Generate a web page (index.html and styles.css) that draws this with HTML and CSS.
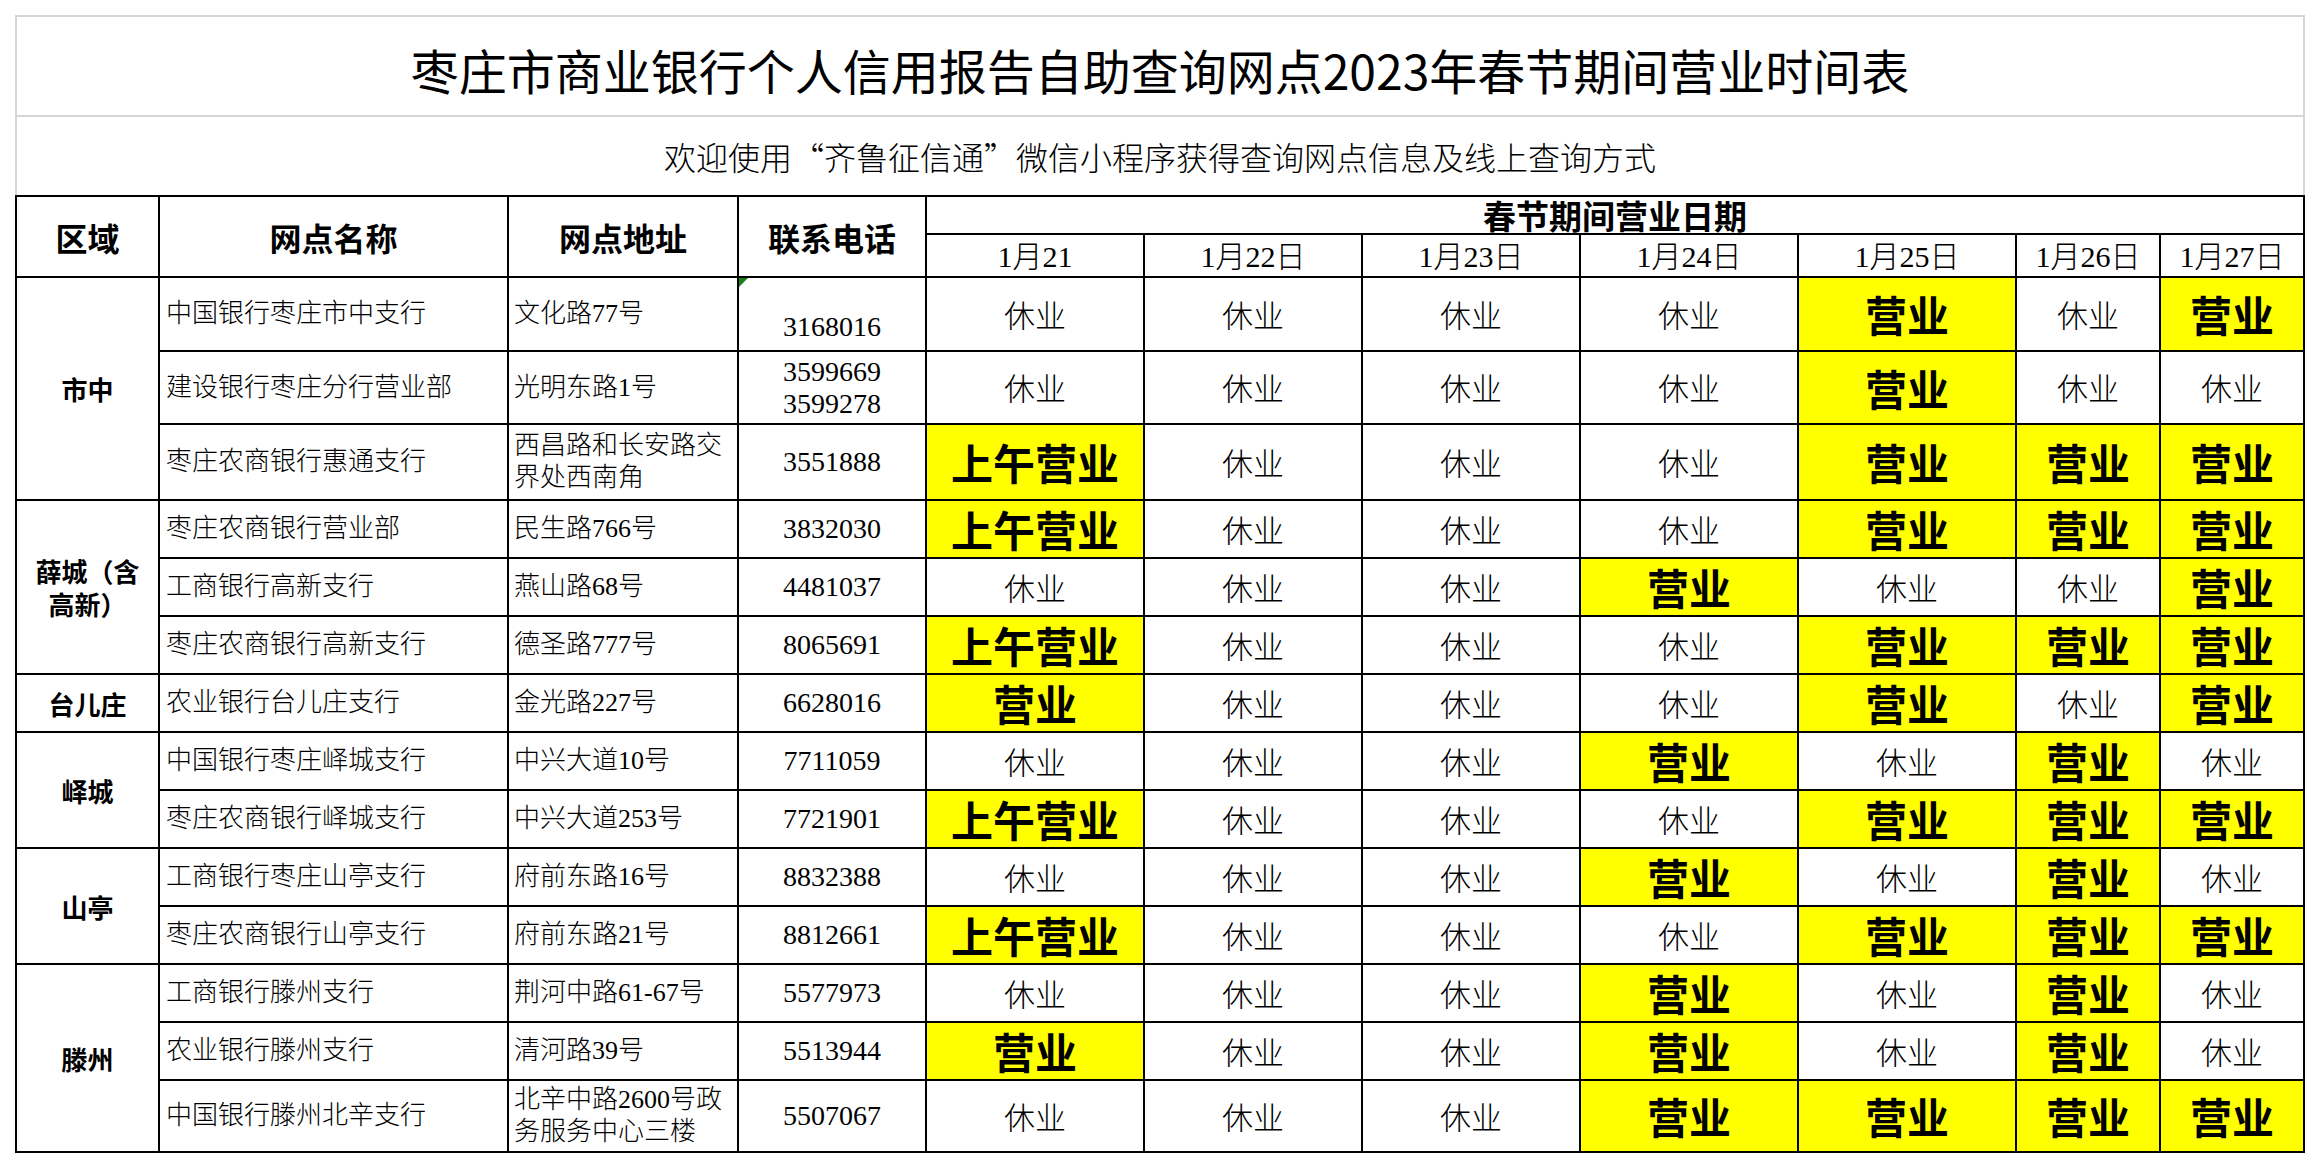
FILE: index.html
```html
<!DOCTYPE html>
<html lang="zh-CN">
<head>
<meta charset="utf-8">
<title>枣庄市商业银行个人信用报告自助查询网点2023年春节期间营业时间表</title>
<link rel="stylesheet" href="styles.css">
</head>
<body>
<div class="sheet">
  <div class="title">枣庄市商业银行个人信用报告自助查询网点2023年春节期间营业时间表</div>
  <div class="subtitle">欢迎使用“齐鲁征信通”微信小程序获得查询网点信息及线上查询方式</div>
  <table class="grid">
    <colgroup>
      <col class="c-rg"><col class="c-nm"><col class="c-ad"><col class="c-ph">
      <col class="c-d"><col class="c-d"><col class="c-d"><col class="c-d"><col class="c-d">
      <col class="c-s"><col class="c-s">
    </colgroup>
    <thead>
      <tr class="h1">
        <th rowspan="2" class="hd">区域</th>
        <th rowspan="2" class="hd">网点名称</th>
        <th rowspan="2" class="hd">网点地址</th>
        <th rowspan="2" class="hd">联系电话</th>
        <th colspan="7" class="hd period">春节期间营业日期</th>
      </tr>
      <tr class="h2">
        <th class="dt">1月21</th>
        <th class="dt">1月22日</th>
        <th class="dt">1月23日</th>
        <th class="dt">1月24日</th>
        <th class="dt">1月25日</th>
        <th class="dt">1月26日</th>
        <th class="dt">1月27日</th>
      </tr>
    </thead>
    <tbody>
      <tr class="r74">
        <td rowspan="3" class="rg">市中</td>
        <td class="nm">中国银行枣庄市中支行</td>
        <td class="ad">文化路77号</td>
        <td class="ph ph-low"><span class="flag"></span>3168016</td>
        <td class="off">休业</td><td class="off">休业</td><td class="off">休业</td><td class="off">休业</td>
        <td class="on">营业</td><td class="off">休业</td><td class="on">营业</td>
      </tr>
      <tr class="r73">
        <td class="nm">建设银行枣庄分行营业部</td>
        <td class="ad">光明东路1号</td>
        <td class="ph">3599669<br>3599278</td>
        <td class="off">休业</td><td class="off">休业</td><td class="off">休业</td><td class="off">休业</td>
        <td class="on">营业</td><td class="off">休业</td><td class="off">休业</td>
      </tr>
      <tr class="r76">
        <td class="nm">枣庄农商银行惠通支行</td>
        <td class="ad">西昌路和长安路交界处西南角</td>
        <td class="ph">3551888</td>
        <td class="on">上午营业</td><td class="off">休业</td><td class="off">休业</td><td class="off">休业</td>
        <td class="on">营业</td><td class="on">营业</td><td class="on">营业</td>
      </tr>
      <tr class="r58">
        <td rowspan="3" class="rg">薛城（含<br>高新）</td>
        <td class="nm">枣庄农商银行营业部</td>
        <td class="ad">民生路766号</td>
        <td class="ph">3832030</td>
        <td class="on">上午营业</td><td class="off">休业</td><td class="off">休业</td><td class="off">休业</td>
        <td class="on">营业</td><td class="on">营业</td><td class="on">营业</td>
      </tr>
      <tr class="r58">
        <td class="nm">工商银行高新支行</td>
        <td class="ad">燕山路68号</td>
        <td class="ph">4481037</td>
        <td class="off">休业</td><td class="off">休业</td><td class="off">休业</td><td class="on">营业</td>
        <td class="off">休业</td><td class="off">休业</td><td class="on">营业</td>
      </tr>
      <tr class="r58">
        <td class="nm">枣庄农商银行高新支行</td>
        <td class="ad">德圣路777号</td>
        <td class="ph">8065691</td>
        <td class="on">上午营业</td><td class="off">休业</td><td class="off">休业</td><td class="off">休业</td>
        <td class="on">营业</td><td class="on">营业</td><td class="on">营业</td>
      </tr>
      <tr class="r58">
        <td class="rg">台儿庄</td>
        <td class="nm">农业银行台儿庄支行</td>
        <td class="ad">金光路227号</td>
        <td class="ph">6628016</td>
        <td class="on">营业</td><td class="off">休业</td><td class="off">休业</td><td class="off">休业</td>
        <td class="on">营业</td><td class="off">休业</td><td class="on">营业</td>
      </tr>
      <tr class="r58">
        <td rowspan="2" class="rg">峄城</td>
        <td class="nm">中国银行枣庄峄城支行</td>
        <td class="ad">中兴大道10号</td>
        <td class="ph">7711059</td>
        <td class="off">休业</td><td class="off">休业</td><td class="off">休业</td><td class="on">营业</td>
        <td class="off">休业</td><td class="on">营业</td><td class="off">休业</td>
      </tr>
      <tr class="r58">
        <td class="nm">枣庄农商银行峄城支行</td>
        <td class="ad">中兴大道253号</td>
        <td class="ph">7721901</td>
        <td class="on">上午营业</td><td class="off">休业</td><td class="off">休业</td><td class="off">休业</td>
        <td class="on">营业</td><td class="on">营业</td><td class="on">营业</td>
      </tr>
      <tr class="r58">
        <td rowspan="2" class="rg">山亭</td>
        <td class="nm">工商银行枣庄山亭支行</td>
        <td class="ad">府前东路16号</td>
        <td class="ph">8832388</td>
        <td class="off">休业</td><td class="off">休业</td><td class="off">休业</td><td class="on">营业</td>
        <td class="off">休业</td><td class="on">营业</td><td class="off">休业</td>
      </tr>
      <tr class="r58">
        <td class="nm">枣庄农商银行山亭支行</td>
        <td class="ad">府前东路21号</td>
        <td class="ph">8812661</td>
        <td class="on">上午营业</td><td class="off">休业</td><td class="off">休业</td><td class="off">休业</td>
        <td class="on">营业</td><td class="on">营业</td><td class="on">营业</td>
      </tr>
      <tr class="r58">
        <td rowspan="3" class="rg">滕州</td>
        <td class="nm">工商银行滕州支行</td>
        <td class="ad">荆河中路61-67号</td>
        <td class="ph">5577973</td>
        <td class="off">休业</td><td class="off">休业</td><td class="off">休业</td><td class="on">营业</td>
        <td class="off">休业</td><td class="on">营业</td><td class="off">休业</td>
      </tr>
      <tr class="r58">
        <td class="nm">农业银行滕州支行</td>
        <td class="ad">清河路39号</td>
        <td class="ph">5513944</td>
        <td class="on">营业</td><td class="off">休业</td><td class="off">休业</td><td class="on">营业</td>
        <td class="off">休业</td><td class="on">营业</td><td class="off">休业</td>
      </tr>
      <tr class="r72">
        <td class="nm">中国银行滕州北辛支行</td>
        <td class="ad">北辛中路2600号政务服务中心三楼</td>
        <td class="ph">5507067</td>
        <td class="off">休业</td><td class="off">休业</td><td class="off">休业</td><td class="on">营业</td>
        <td class="on">营业</td><td class="on">营业</td><td class="on">营业</td>
      </tr>
    </tbody>
  </table>
</div>
</body>
</html>
```
FILE: styles.css
```css
html, body {
  margin: 0;
  padding: 0;
  background: #ffffff;
}

body {
  font-family: "Liberation Serif", "Noto Sans CJK SC", serif;
  color: #000;
}

.sheet {
  padding: 15px 0 0 15px;
  width: 2290px;
}

.title {
  box-sizing: border-box;
  height: 100px;
  border: 2px solid #d6d6d6;
  border-bottom: none;
  display: flex;
  align-items: center;
  justify-content: center;
  padding-top: 6px;
  font-family: "Noto Sans CJK SC", sans-serif;
  font-size: 48px;
  line-height: 1;
}

.subtitle {
  box-sizing: border-box;
  height: 80px;
  border: 2px solid #d6d6d6;
  border-bottom: none;
  display: flex;
  align-items: center;
  justify-content: center;
  font-family: "Noto Sans CJK SC", sans-serif;
  font-size: 32px;
  font-weight: 300;
  line-height: 1;
}

.grid {
  border-collapse: collapse;
  table-layout: fixed;
  width: 2290px;
}

.c-rg { width: 143px; }
.c-nm { width: 349px; }
.c-ad { width: 230px; }
.c-ph { width: 188px; }
.c-d  { width: 218px; }
.c-s  { width: 144px; }

.grid th,
.grid td {
  border: 2px solid #000;
  padding: 0;
  vertical-align: middle;
  text-align: center;
}

.h1 { height: 38px; }
.h2 { height: 43px; }
.r74 { height: 74px; }
.r73 { height: 73px; }
.r76 { height: 76px; }
.r58 { height: 58px; }
.r72 { height: 72px; }

.grid .hd {
  font-family: "Noto Sans CJK SC", sans-serif;
  font-weight: 700;
  font-size: 32px;
  line-height: 1;
}

.grid .period {
  font-size: 33px;
}

.grid .dt {
  font-weight: 300;
  font-size: 30px;
  line-height: 1;
  padding-top: 2px;
}

.grid .rg {
  font-family: "Noto Sans CJK SC", sans-serif;
  font-weight: 700;
  font-size: 26px;
  line-height: 33px;
  padding: 0 4px;
}

.grid .nm {
  text-align: left;
  padding-left: 6px;
  font-size: 26px;
  font-weight: 300;
  line-height: 32px;
}

.grid .ad {
  text-align: left;
  padding: 0 4px 0 5px;
  font-size: 26px;
  font-weight: 300;
  line-height: 32px;
  word-break: break-all;
}

.grid .ph {
  position: relative;
  font-size: 28px;
  line-height: 32px;
}

.grid .ph-low {
  vertical-align: bottom;
  padding-bottom: 7px;
}

.flag {
  position: absolute;
  top: 0;
  left: 0;
  width: 0;
  height: 0;
  border-top: 9px solid #1a7f1a;
  border-right: 9px solid transparent;
}

.grid .off {
  font-size: 31px;
  font-weight: 300;
  line-height: 1;
  padding-top: 4px;
}

.grid .on {
  background: #ffff00;
  font-family: "Noto Sans CJK SC", sans-serif;
  font-weight: 700;
  font-size: 42px;
  line-height: 1;
}
```
